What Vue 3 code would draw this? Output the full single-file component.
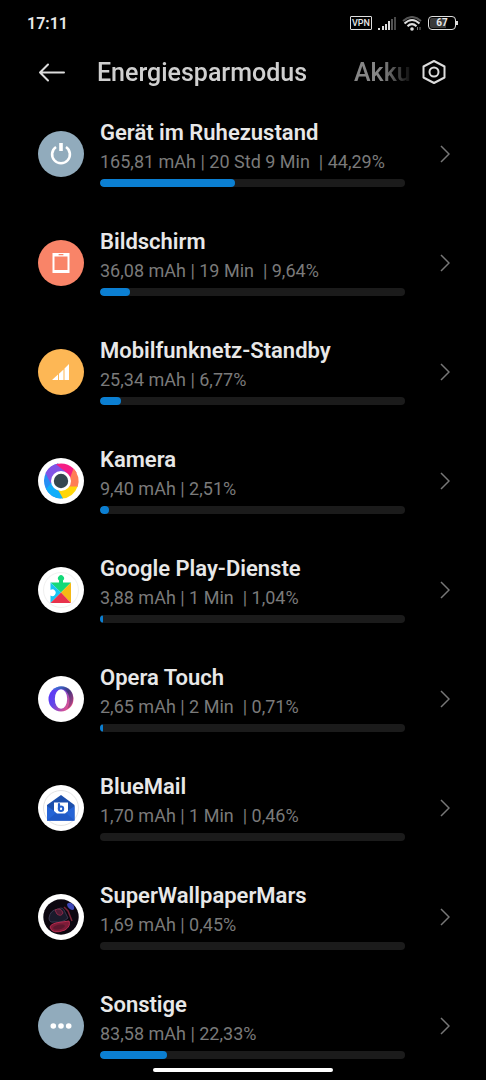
<script setup>
const items = [
  { id: 'idle', name: 'Gerät im Ruhezustand', detail: '165,81 mAh | 20 Std 9 Min  | 44,29%', fill: 44.29 },
  { id: 'screen', name: 'Bildschirm', detail: '36,08 mAh | 19 Min  | 9,64%', fill: 9.9 },
  { id: 'cell', name: 'Mobilfunknetz-Standby', detail: '25,34 mAh | 6,77%', fill: 7 },
  { id: 'camera', name: 'Kamera', detail: '9,40 mAh | 2,51%', fill: 3 },
  { id: 'play', name: 'Google Play-Dienste', detail: '3,88 mAh | 1 Min  | 1,04%', fill: 1.04 },
  { id: 'opera', name: 'Opera Touch', detail: '2,65 mAh | 2 Min  | 0,71%', fill: 1 },
  { id: 'mail', name: 'BlueMail', detail: '1,70 mAh | 1 Min  | 0,46%', fill: 0 },
  { id: 'mars', name: 'SuperWallpaperMars', detail: '1,69 mAh | 0,45%', fill: 0 },
  { id: 'other', name: 'Sonstige', detail: '83,58 mAh | 22,33%', fill: 22.1 },
]
</script>

<template>
  <div class="screen">
    <div class="status">
      <span class="clock">17:11</span>
      <div class="indicators">
        <span class="vpn">VPN</span>
        <svg width="18" height="13" viewBox="0 0 18 13" aria-hidden="true">
          <g fill="#dedede">
            <rect x="0" y="11" width="2" height="2" /><rect x="4" y="9" width="2" height="4" />
            <rect x="7" y="7" width="2" height="6" /><rect x="10" y="4" width="2" height="9" />
          </g>
          <rect x="13" y="2" width="2" height="11" fill="#555" />
          <rect x="16" y="0" width="2" height="13" fill="#484848" />
        </svg>
        <svg width="20" height="15" viewBox="0 0 20 15" fill="none" stroke-width="2" aria-hidden="true">
          <path d="M1 5Q10 -3 19 5" stroke="#555" />
          <path d="M2.500 7.500Q10 0.500 17.500 7.500" stroke="#dedede" />
          <path d="M5.500 10.300Q10 6 14.500 10.300" stroke="#dedede" />
          <circle cx="10" cy="13" r="1.800" fill="#dedede" />
          <path d="M15.500 11v3M18 11v3" stroke="#777" stroke-width="1" />
        </svg>
        <span class="battery"><span class="level">67</span></span>
      </div>
    </div>

    <header class="header">
      <button class="back" type="button" aria-label="Zurück">
        <svg width="28" height="20" viewBox="0 0 28 20" fill="none" stroke="#dcdcdc" stroke-width="2" stroke-linecap="round" stroke-linejoin="round">
          <path d="M26 9.500H2M10 1.500L2 9.500L10 17.500" />
        </svg>
      </button>
      <nav class="tabs">
        <a class="tab active" href="#sparmodus" aria-current="page">Energiesparmodus</a>
        <a class="tab" href="#akku">Akku</a>
      </nav>
      <button class="settings" type="button" aria-label="Einstellungen">
        <svg width="24" height="26" viewBox="0 0 24 26" fill="none" stroke="#dcdcdc" stroke-width="2" stroke-linejoin="round">
          <path d="M12 1L22.500 6.500V17.500L12 23L1.500 17.500V6.500Z" />
          <circle cx="12" cy="12" r="4.500" />
        </svg>
      </button>
    </header>

    <main class="list">
      <button v-for="item in items" :key="item.id" class="row" type="button">
        <svg class="icon" viewBox="0 0 46 46" aria-hidden="true">
          <g v-if="item.id === 'idle'">
            <circle cx="23" cy="23" r="23" fill="#91abbc" />
            <path d="M18 16A8.900 8.900 0 1 0 28 16" fill="none" stroke="#fff" stroke-width="2.600" />
            <rect x="21.200" y="12" width="3.600" height="8" fill="#fff" />
          </g>
          <g v-else-if="item.id === 'screen'">
            <circle cx="23" cy="23" r="23" fill="#f98468" />
            <rect x="14.500" y="13" width="17" height="20" fill="#fff" />
            <rect x="16.500" y="16.500" width="13" height="13.500" fill="#f98468" />
            <rect x="20.500" y="14" width="5" height="1.300" rx="0.600" fill="#f98468" />
          </g>
          <g v-else-if="item.id === 'cell'">
            <circle cx="23" cy="23" r="23" fill="#fdb755" />
            <path d="M14 31L20 25.600V31ZM21 31V24.700L25.500 20.500V31ZM26.500 31V19.600L31 15V31Z" fill="#fff" />
          </g>
          <g v-else-if="item.id === 'camera'">
            <circle cx="23" cy="23" r="23" fill="#fff" />
            <path d="M7.500 30A17.600 17.600 0 0 1 20 5.600L22 13L14 21L16 31L23 40.500A17.600 17.600 0 0 1 7.500 30Z" fill="#268ff4" />
            <path d="M7.500 15A17.600 17.600 0 0 1 20 5.600L33 14L17 17L14 28Z" fill="#8153e6" />
            <path d="M18 6.200A17.600 17.600 0 0 1 38.500 14.800L31 27L29 15Z" fill="#f51d85" />
            <path d="M35.500 10.500A17.600 17.600 0 0 1 39.600 29H27L32 20Z" fill="#ff7d55" />
            <path d="M39.600 28.500A17.600 17.600 0 0 1 24 40.500L17 31L31 28.500Z" fill="#ffd60a" />
            <path d="M8 31L15 23L25 40.500A17.600 17.600 0 0 1 8 31Z" fill="#12aefa" />
            <circle cx="23" cy="23" r="10" fill="#fff" />
            <circle cx="23" cy="23" r="7.200" fill="#35474f" />
          </g>
          <g v-else-if="item.id === 'play'">
            <circle cx="23" cy="23" r="23" fill="#fff" />
            <circle cx="23" cy="23" r="17.500" fill="none" stroke="#f0f0f0" />
            <path d="M12.500 15.500H21V13.500A3 3 0 1 1 25 13.500V15.500H33L23 25.500Z" fill="#13d978" />
            <path d="M12.500 15.500L23 25.500L12.500 36V28.500A3.300 3.300 0 1 0 12.500 23Z" fill="#16c5f3" />
            <path d="M33 15.500V36L23 25.500Z" fill="#f5b915" />
            <path d="M12.500 36L23 25.500L33 36Z" fill="#e8324c" />
          </g>
          <g v-else-if="item.id === 'opera'">
            <defs>
              <linearGradient id="opera-ring" x1="0" y1="0" x2="1" y2="0.600">
                <stop offset="0" stop-color="#5a32ff" /><stop offset="0.450" stop-color="#6246e8" />
                <stop offset="1" stop-color="#ee5384" />
              </linearGradient>
              <linearGradient id="opera-shade" x1="0" y1="0" x2="1" y2="1">
                <stop offset="0" stop-color="#389be8" /><stop offset="0.500" stop-color="#262866" />
                <stop offset="1" stop-color="#b5478e" />
              </linearGradient>
            </defs>
            <circle cx="23" cy="23" r="23" fill="#fff" />
            <circle cx="23" cy="23" r="12.500" fill="url(#opera-ring)" />
            <path d="M15 14C20 8 29 9.500 33 15C37 21 35.500 30 29 33C34 25 31 14 24 13C20 12.500 18 14 15 14Z" fill="url(#opera-shade)" opacity="0.750" />
            <ellipse cx="23" cy="23" rx="6.200" ry="9.800" fill="#fff" />
          </g>
          <g v-else-if="item.id === 'mail'">
            <circle cx="23" cy="23" r="23" fill="#fff" />
            <circle cx="23" cy="23" r="17.500" fill="none" stroke="#e3e3e3" />
            <path d="M9 20L23 10L36.500 20V35.500H9Z" fill="#1c4fac" />
            <path d="M9 21L23 30.500L36.500 21V35.500H9Z" fill="#2564d6" />
            <path d="M9 35.500L18 28H28L36.500 35.500Z" fill="#2059c6" />
            <path d="M16 17.500H30V26L27 28.500H19L16 26Z" fill="#fff" />
            <path d="M21 19V24" fill="none" stroke="#235fcc" stroke-width="2.200" stroke-linecap="round" />
            <circle cx="23" cy="23.700" r="2.200" fill="none" stroke="#235fcc" stroke-width="2" />
          </g>
          <g v-else-if="item.id === 'mars'">
            <circle cx="23" cy="23" r="23" fill="#fff" />
            <circle cx="23" cy="23" r="17.700" fill="#0c0710" />
            <path d="M29 10Q32 7 35.500 11Q37.500 16 34 16Q29 14 29 10Z" fill="#3e48b8" />
            <path d="M11 24Q12 16 20 15Q25 12 27 18L30 24Q25 29 16 28Q11 29 11 24Z" fill="#1a1a2b" stroke="#44405c" stroke-width="0.800" />
            <path d="M17 16Q23 13 25 19Q23 23 19 20Z" fill="#4e1c35" stroke="#8c2948" stroke-width="1" />
            <path d="M26 13L30 17L34 27" fill="none" stroke="#7c2438" stroke-width="1.500" />
            <path d="M12 33Q13 29 24 28L31 27Q33 32 27 36Q14 41 12 33Z" fill="#7d1c38" stroke="#b62c50" stroke-width="1" />
            <ellipse cx="21" cy="33" rx="6" ry="2.300" transform="rotate(-12 21 33)" fill="#5c172e" />
          </g>
          <g v-else>
            <circle cx="23" cy="23" r="23" fill="#91abbc" />
            <g fill="#fff"><circle cx="15.300" cy="23" r="2.800" /><circle cx="23" cy="23" r="2.800" /><circle cx="30.700" cy="23" r="2.800" /></g>
          </g>
        </svg>
        <span class="body">
          <span class="name">{{ item.name }}</span>
          <span class="detail">{{ item.detail }}</span>
          <span class="track"><span class="fill" :style="{ width: item.fill + '%' }"></span></span>
        </span>
        <svg class="chevron" width="10" height="18" viewBox="0 0 10 18" fill="none" stroke="#777" stroke-width="1.500" aria-hidden="true">
          <path d="M1 1L9 9L1 17" />
        </svg>
      </button>
    </main>
    <div class="home"></div>
  </div>
</template>

<style>
body {
  background: #000;
}
</style>

<style scoped>
.screen {
  min-height: 100vh;
  background: #000;
  color: #e8e8e8;
  font-family: Roboto, "Liberation Sans", sans-serif;
}
button {
  border: 0;
  padding: 0;
  background: none;
  color: inherit;
  font: inherit;
  text-align: left;
}
svg {
  display: block;
}
.status {
  display: flex;
  align-items: center;
  justify-content: space-between;
  height: 46px;
  padding: 0 27px;
}
.clock {
  font-size: 16px;
  font-weight: 600;
}
.indicators {
  display: flex;
  align-items: center;
  gap: 6px;
}
.vpn {
  box-sizing: border-box;
  width: 22px;
  height: 14px;
  border: 1px solid #dedede;
  border-radius: 1px;
  font-size: 9px;
  font-weight: 500;
  line-height: 12px;
  text-align: center;
}
.battery {
  position: relative;
  box-sizing: border-box;
  width: 28px;
  height: 14px;
  margin-right: 3px;
  padding: 1px;
  border: 1px solid #dedede;
  border-radius: 4px;
}
.battery::after {
  content: "";
  position: absolute;
  top: 4px;
  right: -3px;
  width: 2px;
  height: 4px;
  background: #dedede;
}
.level {
  display: block;
  border-radius: 2px;
  background: linear-gradient(to right, #3a3a3a 67%, #000 67%);
  font-size: 10px;
  font-weight: 700;
  line-height: 10px;
  text-align: center;
}
.header {
  display: flex;
  align-items: center;
  height: 54px;
  padding: 0 40px 0 38px;
}
.back {
  flex: none;
  width: 59px;
}
.tabs {
  display: flex;
  flex: 1;
  gap: 47px;
  min-width: 0;
  overflow: hidden;
  white-space: nowrap;
  mask-image: linear-gradient(to right, #000 calc(100% - 32px), transparent);
}
.tab {
  color: #868686;
  font-size: 25px;
  font-weight: 500;
  line-height: 34px;
  text-decoration: none;
}
.tab.active {
  color: #d0d0d0;
}
.settings {
  flex: none;
  margin-left: 8px;
}
.list {
  display: grid;
  gap: 1px;
}
.row {
  display: grid;
  grid-template-columns: 46px 1fr 10px;
  align-items: center;
  width: 100%;
  min-height: 108px;
  padding: 0 36px 0 38px;
}
.icon {
  width: 46px;
  height: 46px;
}
.body {
  display: block;
  margin: 0 35px 0 16px;
  padding-bottom: 1px;
}
.name {
  display: block;
  margin-bottom: 4px;
  font-size: 22px;
  font-weight: 600;
  line-height: 26px;
}
.detail {
  display: block;
  margin-bottom: 5px;
  color: #7a7a7a;
  font-size: 18px;
  line-height: 24px;
  white-space: pre;
}
.track {
  display: block;
  height: 8px;
  overflow: hidden;
  border-radius: 4px;
  background: #1b1b1b;
}
.fill {
  display: block;
  height: 100%;
  border-radius: 4px;
  background: #0b7fd2;
}
.home {
  position: fixed;
  bottom: 8px;
  left: 50%;
  width: 180px;
  height: 4px;
  margin-left: -90px;
  border-radius: 2px;
  background: #fff;
}
</style>
